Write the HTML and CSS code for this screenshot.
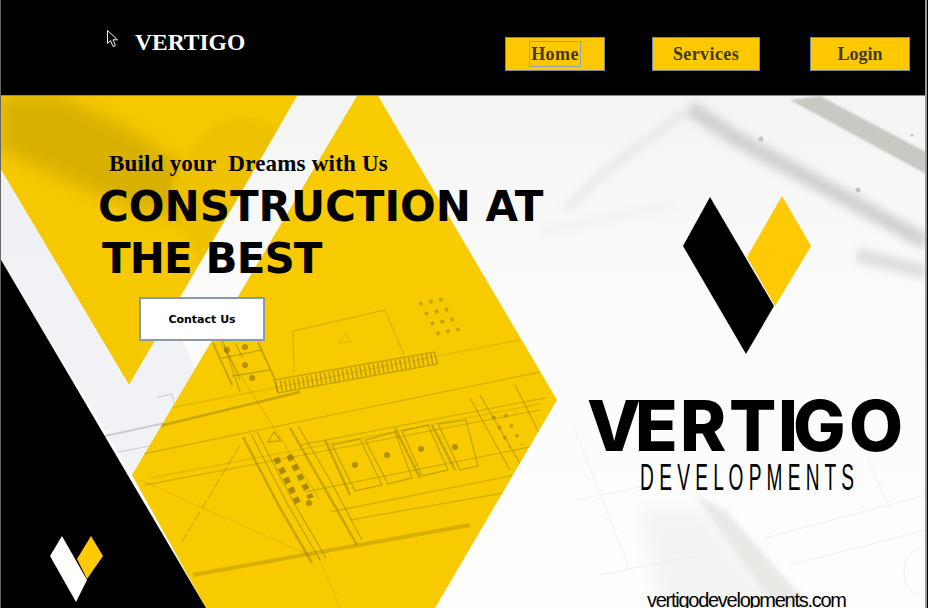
FILE: index.html
```html
<html lang="en">
<head>
  <meta charset="UTF-8">
  <meta name="viewport" content="width=device-width, initial-scale=1.0">
  <title>Vertigo Developments</title>
  <link rel="stylesheet" href="styles.css">
</head>

<body>
  <div class="page">
    <header class="topbar">
      <div class="brand">
        <svg class="cursor" width="12" height="18" viewBox="0 0 12 18">
          <path d="M.5 .5V13.5L3.6 10.6L6 16.5L8.4 15.5L6 9.8H10.5Z" fill="#000" stroke="#eee" stroke-width="1"/>
        </svg>
        <span class="brand-name">VERTIGO</span>
      </div>
      <nav class="nav">
        <a class="nav-btn nav-home"><span class="focus">Home</span></a>
        <a class="nav-btn nav-services">Services</a>
        <a class="nav-btn nav-login">Login</a>
      </nav>
    </header>

    <section class="hero">
      <!-- picture behind the hero, coordinates are page coordinates -->
      <svg class="hero-art" width="925" height="512" viewBox="1 96 925 512">
        <defs>
          <linearGradient id="paper" x1="0" y1="0" x2="0" y2="1">
            <stop offset="0" stop-color="#f4f4f3"/>
            <stop offset="0.4" stop-color="#fbfbfb"/>
            <stop offset="1" stop-color="#fefefe"/>
          </linearGradient>
          <filter id="blur8"><feGaussianBlur stdDeviation="8"/></filter>
          <filter id="blur4"><feGaussianBlur stdDeviation="4"/></filter>
          <filter id="blur3"><feGaussianBlur stdDeviation="2.5"/></filter>
          <filter id="blur1"><feGaussianBlur stdDeviation="1"/></filter>
          <filter id="blur05"><feGaussianBlur stdDeviation="0.7"/></filter>
          <clipPath id="fold-clip">
            <polygon points="0,96 297,96 129,385 0,168"/>
          </clipPath>
          <clipPath id="plan-clip">
            <polygon points="357,96 378,96 557,400 435,608 206,608 132,475"/>
          </clipPath>
        </defs>

        <rect x="0" y="96" width="928" height="512" fill="url(#paper)"/>

        <!-- ruler and paper edges, top right -->
        <polygon points="790,100 820,96 926,152 926,174" fill="#c9c9c4" filter="url(#blur1)"/>
        <g filter="url(#blur4)" fill="none">
          <polyline points="690,108 735,138 926,242" stroke="#d2d2cf" stroke-width="16"/>
          <polyline points="685,112 605,172 565,210" stroke="#e6e6e4" stroke-width="7"/>
          <polyline points="540,232 673,205" stroke="#eeeeec" stroke-width="5"/>
          <polyline points="926,272 857,255" stroke="#dedddb" stroke-width="14"/>
        </g>
        <g fill="#c4c4c0" filter="url(#blur05)">
          <circle cx="761" cy="139" r="2.5"/>
          <circle cx="858" cy="190" r="2.5"/>
          <circle cx="912" cy="135" r="1.5"/>
        </g>

        <!-- pencil and shade, bottom right -->
        <polygon points="640,510 705,510 785,608 660,608" fill="#f3f3f1" filter="url(#blur8)"/>
        <polygon points="695,495 725,510 812,608 775,608" fill="#e9e9e6" filter="url(#blur3)"/>
        <g stroke="#efefed" stroke-width="1" fill="none">
          <line x1="600" y1="575" x2="700" y2="555"/>
          <line x1="765" y1="538" x2="926" y2="495"/>
          <line x1="790" y1="565" x2="926" y2="530"/>
          <line x1="575" y1="430" x2="630" y2="570"/>
          <line x1="860" y1="440" x2="890" y2="510"/>
          <line x1="575" y1="500" x2="650" y2="485"/>
          <ellipse cx="918" cy="572" rx="14" ry="22"/>
        </g>

        <!-- yellow fold, top left -->
        <polygon points="0,96 297,96 129,385 0,168" fill="#f6c800"/>
        <g clip-path="url(#fold-clip)">
          <polygon points="0,96 60,96 130,130 190,170 200,225 110,200 0,150" fill="#d8b000" filter="url(#blur8)"/>
          <path d="M170 190Q200 110 250 118L290 130L200 270Z" fill="#eec200" filter="url(#blur3)"/>
        </g>

        <!-- white band beside the black corner -->
        <polygon points="0,168 129,385 170,315 215,410 132,475 0,258" fill="#eceef2" opacity=".7"/>
        <g fill="none" stroke="#b9bcc0" stroke-opacity=".7" filter="url(#blur05)">
          <polyline points="158,397 172,394 176,412"/>
          <line x1="105" y1="436" x2="170" y2="422" stroke-width="2"/>
          <line x1="118" y1="452" x2="150" y2="446"/>
        </g>

        <!-- big yellow shape -->
        <polygon points="357,96 378,96 557,400 435,608 206,608 132,475" fill="#f8ca00"/>

        <!-- plan lines -->
        <g clip-path="url(#plan-clip)">
          <g fill="none" stroke="#8a7000" stroke-opacity=".42" stroke-width="1.3" filter="url(#blur05)">
            <!-- long lines across the plan -->
            <line x1="138" y1="455" x2="540" y2="372" stroke-opacity=".3"/>
            <line x1="118" y1="436" x2="300" y2="392" stroke-width="2.5"/>
            <line x1="160" y1="410" x2="520" y2="340" stroke-opacity=".2"/>
            <line x1="193" y1="575" x2="470" y2="525" stroke-width="4" stroke-opacity=".3"/>
            <line x1="145" y1="485" x2="540" y2="410" stroke-opacity=".3"/>
            <line x1="150" y1="478" x2="540" y2="404" stroke-opacity=".2"/>
            <line x1="300" y1="445" x2="545" y2="398" stroke-opacity=".3"/>
            <line x1="305" y1="492" x2="540" y2="445" stroke-opacity=".3"/>
            <line x1="330" y1="512" x2="540" y2="470" stroke-opacity=".3"/>
            <line x1="350" y1="520" x2="520" y2="490" stroke-opacity=".3"/>
            <line x1="220" y1="343" x2="320" y2="500" stroke-opacity=".2"/>
            <line x1="224" y1="345" x2="240" y2="392"/>

            <!-- hatched strip -->
            <polygon points="274,380 434,352 438,364 278,393"/>
            <line x1="276" y1="387" x2="436" y2="358" stroke-width="11" stroke-dasharray="1.5 3" stroke-opacity=".5"/>

            <!-- room above the strip -->
            <polyline points="293,331 294,372" stroke-opacity=".25"/>
            <polyline points="293,331 385,310 404,355" stroke-opacity=".25"/>
            <polygon points="339,343 345,333 351,342" stroke-opacity=".15"/>

            <!-- cabinet beside the button -->
            <polyline points="213,343 232,385" stroke-width="2"/>
            <polyline points="222,340 240,380"/>
            <line x1="235" y1="343" x2="243" y2="358"/>
            <line x1="222" y1="358" x2="262" y2="350"/>
            <line x1="232" y1="376" x2="270" y2="370"/>
            <polyline points="258,342 275,380" stroke-width="2"/>

            <!-- big panels along the bottom -->
            <polyline points="243,437 280,508 312,563" stroke-width="2.5"/>
            <polyline points="251,434 288,505 320,560"/>
            <polyline points="257,432 294,503 326,558"/>
            <polyline points="290,428 320,480 357,545" stroke-width="2.5"/>
            <polyline points="298,426 330,480 362,540"/>
            <polygon points="332,445 360,439 382,485 355,491"/>
            <polygon points="365,440 395,432 412,478 388,484"/>
            <polygon points="402,431 428,425 448,470 422,476"/>
            <polygon points="438,424 466,420 478,466 460,470"/>
            <line x1="325" y1="440" x2="350" y2="495" stroke-width="2.5"/>
            <line x1="395" y1="428" x2="420" y2="478" stroke-width="2.5"/>
            <line x1="432" y1="425" x2="455" y2="470" stroke-width="2.5"/>
            <polygon points="268,442 274,432 281,441"/>
            <polyline points="470,398 510,470"/>
            <polyline points="480,395 525,472"/>
            <polyline points="515,385 545,445"/>

            <!-- diagonals lower left -->
            <line x1="240" y1="445" x2="180" y2="545" stroke-dasharray="10 3" stroke-opacity=".3"/>
            <line x1="140" y1="480" x2="320" y2="560" stroke-opacity=".15"/>
            <line x1="318" y1="555" x2="340" y2="608" stroke-opacity=".15"/>
          </g>

          <!-- dots of the plan -->
          <g fill="#7a6400" fill-opacity=".55" filter="url(#blur05)">
            <circle cx="227" cy="350" r="3"/>
            <circle cx="245" cy="347" r="3"/>
            <circle cx="245" cy="365" r="3"/>
            <circle cx="252" cy="378" r="3"/>
            <circle cx="355" cy="465" r="3"/>
            <circle cx="387" cy="455" r="3"/>
            <circle cx="421" cy="449" r="3"/>
            <circle cx="455" cy="447" r="3"/>
            <circle cx="309" cy="503" r="3"/>
          </g>
          <g fill="none" stroke="#7a6400" stroke-opacity=".4" stroke-width="3.5" stroke-dasharray="3.5 8" filter="url(#blur05)">
            <line x1="420" y1="302" x2="440" y2="337"/>
            <line x1="430" y1="300" x2="450" y2="335"/>
            <line x1="440" y1="298" x2="460" y2="333"/>
            <line x1="493" y1="416" x2="510" y2="447"/>
            <line x1="505" y1="414" x2="522" y2="445"/>
          </g>
          <g fill="none" stroke="#6a5600" stroke-opacity=".55" stroke-width="6" stroke-dasharray="6 5" filter="url(#blur05)">
            <line x1="276" y1="458" x2="298" y2="503"/>
            <line x1="289" y1="455" x2="311" y2="498"/>
          </g>
        </g>

        <!-- black corner -->
        <polygon points="0,258 206,608 0,608" fill="#000"/>

        <!-- small mark in the corner -->
        <polygon points="62,536 50,556 76,602 87,580" fill="#fff"/>
        <polygon points="91,536 103,556 87,579 77,559" fill="#ffc904"/>

        <!-- large mark -->
        <polygon points="782,196 811,246 775,306 747,257" fill="#ffc904"/>
        <polygon points="710,197 683,246 746,354 774,306" fill="#000"/>

        <text class="logo-word" x="587 635 680 729 778 793 849" y="451">VERTIGO</text>
        <text class="logo-sub" x="640" y="490" textLength="214" lengthAdjust="spacingAndGlyphs">D E V E L O P M E N T S</text>
        <text class="logo-url" x="647" y="607" textLength="200" lengthAdjust="spacing">vertigodevelopments.com</text>
      </svg>

      <div class="hero-content">
        <p class="tagline">Build your&nbsp; Dreams with Us</p>
        <h1 class="headline">
          <span class="line-one">CONSTRUCTION AT</span>
          <span class="line-two">THE BEST</span>
        </h1>
        <a class="contact-btn">Contact Us</a>
      </div>
    </section>
  </div>
</body>
</html>
```

FILE: styles.css
```css
body {
  margin: 0;
  padding: 0;
  background-color: #000;
  font-family: "Liberation Serif", serif;
}

.page {
  width: 928px;
  height: 608px;
  box-sizing: border-box;
  border-left: 1px solid #666;
  border-right: 1px solid #000;
  overflow: hidden;
  position: relative;
}

.page::after {
  content: "";
  position: absolute;
  top: 0;
  bottom: 0;
  right: 0;
  width: 2px;
  background-color: #999;
}

.topbar {
  height: 96px;
  box-sizing: border-box;
  background-color: #000;
  border-bottom: 1px solid #8a8a8a;
  display: flex;
  justify-content: space-between;
  align-items: flex-start;
  padding: 30px 17px 0 106px;
}

.brand {
  display: flex;
  align-items: flex-start;
  gap: 16px;
}

.brand-name {
  color: #fff;
  font-size: 23.5px;
  font-weight: bold;
  line-height: 24px;
}

.nav {
  display: flex;
  gap: 47px;
  margin-top: 7px;
}

.nav-btn {
  height: 34px;
  box-sizing: border-box;
  display: flex;
  justify-content: center;
  align-items: center;
  background-color: #ffc800;
  border: 1px solid #7c8a99;
  color: #3f3a1c;
  font-size: 18px;
  font-weight: bold;
  letter-spacing: 0.4px;
}

.nav-home {
  width: 100px;
}

.nav-services {
  width: 108px;
}

.nav-login {
  width: 100px;
  margin-left: 3px;
  letter-spacing: 0;
}

.focus {
  border: 1px solid #8fa3b8;
  padding: 3px 1px;
  line-height: 18px;
}

.hero {
  position: relative;
  height: 512px;
  overflow: hidden;
  background-color: #fafafa;
}

.hero-art {
  position: absolute;
  top: 0;
  left: 0;
  display: block;
}

.hero-art text {
  fill: #000;
}

.logo-word {
  font-family: Inter, sans-serif;
  font-size: 70px;
  font-weight: 800;
}

.logo-sub {
  font-family: "Liberation Sans Narrow", "Liberation Sans", sans-serif;
  font-size: 37px;
}

.logo-url {
  font-family: "Liberation Sans", sans-serif;
  font-size: 20px;
  fill: #111;
}

.hero-content {
  position: relative;
  padding: 54px 0 0 97px;
}

.tagline {
  margin: 0 0 0 11px;
  font-size: 23px;
  font-weight: bold;
  line-height: 27px;
  letter-spacing: 0.2px;
  color: #000;
}

.headline {
  margin: 4px 0 0;
  font-family: "DejaVu Sans", sans-serif;
  font-size: 42px;
  font-weight: bold;
  line-height: 52px;
  color: #000;
  white-space: nowrap;
}

.line-one,
.line-two {
  display: block;
}

.line-two {
  margin-left: 4px;
  letter-spacing: -0.9px;
}

.contact-btn {
  display: flex;
  justify-content: center;
  align-items: center;
  width: 126px;
  height: 44px;
  box-sizing: border-box;
  margin: 12px 0 0 41px;
  background-color: #fff;
  border: 2px solid #8a99aa;
  color: #000;
  font-family: "DejaVu Sans", sans-serif;
  font-size: 11px;
  font-weight: bold;
}
```
